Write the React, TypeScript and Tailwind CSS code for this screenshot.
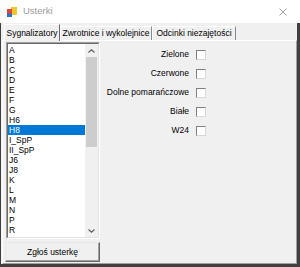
const items = [
  "A", "B", "C", "D", "E", "F", "G", "H6", "H8", "I_SpP", "II_SpP",
  "J6", "J8", "K", "L", "M", "N", "P", "R",
];

const lights = ["Zielone", "Czerwone", "Dolne pomarańczowe", "Białe", "W24"];

const tabs = [
  { label: "Sygnalizatory", width: "w-[56px]" },
  { label: "Zwrotnice i wykolejnice", width: "w-[92px]" },
  { label: "Odcinki niezajętości", width: "w-[84px]" },
];

function AppIcon() {
  return (
    <svg width="10" height="10" viewBox="0 0 10 10">
      <rect x="4" y="0" width="6" height="8" fill="#f4c531" />
      <rect x="0" y="2" width="5" height="5" fill="#e0473b" />
      <rect x="0" y="6.5" width="5" height="3.5" fill="#2f6fd0" />
    </svg>
  );
}

function Chevron({ up }: { up?: boolean }) {
  return (
    <svg width="7" height="4" viewBox="0 0 7 4">
      <polyline
        points={up ? "0.5,3.5 3.5,0.8 6.5,3.5" : "0.5,0.5 3.5,3.2 6.5,0.5"}
        fill="none"
        stroke="#606060"
        strokeWidth="1.2"
      />
    </svg>
  );
}

export default function App() {
  const selected = "H8";

  return (
    <div className="w-[300px] h-[267px] bg-[#f0f0f0] flex flex-col overflow-hidden font-['Liberation_Sans',Arial,sans-serif] text-[8.5px] text-black">
      {/* Title bar */}
      <div className="h-[23px] bg-white flex items-center pl-[7px] pr-[13px] shrink-0">
        <AppIcon />
        <span className="ml-[6px] text-[9.5px] text-[#9a9a9a]">Usterki</span>
        <svg className="ml-auto" width="8" height="8" viewBox="0 0 8 8">
          <path d="M0.5 0.5 L7.5 7.5 M7.5 0.5 L0.5 7.5" stroke="#9a9a9a" strokeWidth="0.9" />
        </svg>
      </div>

      {/* Body */}
      <div className="flex-1 flex flex-col border-l border-r-[3px] border-b-[3px] border-[#404040]">
        {/* Tab strip */}
        <div className="h-[17px] flex items-end pl-[3px] shrink-0">
          {tabs.map((t, i) =>
            i === 0 ? (
              <div
                key={t.label}
                className={`${t.width} h-[17px] -mb-px relative z-10 bg-[#f0f0f0] border-t border-l border-white border-r border-r-[#696969] flex items-center justify-center`}
              >
                {t.label}
              </div>
            ) : (
              <div
                key={t.label}
                className={`${t.width} h-[14px] border-t border-l border-white border-r border-r-[#8a8a8a] flex items-center justify-center`}
              >
                {t.label}
              </div>
            )
          )}
        </div>

        {/* Tab panel */}
        <div className="flex-1 flex border-t border-l border-white border-r border-b border-r-[#a0a0a0] border-b-[#a0a0a0] ml-px pl-[2px]">
          {/* List + button */}
          <div className="w-[95px] flex flex-col">
            <div className="mt-px ml-px w-[94px] h-[197px] border border-[#a0a0a0] border-r-white border-b-white">
              <div className="h-full border border-[#696969] border-r-[#e3e3e3] border-b-[#e3e3e3] bg-white flex">
                <div className="flex-1 pt-px">
                  {items.map((it) => (
                    <div
                      key={it}
                      className={`h-[10px] leading-[10px] pl-px ${
                        it === selected ? "bg-[#0078d7] text-white" : ""
                      }`}
                    >
                      {it}
                    </div>
                  ))}
                </div>
                {/* Scrollbar */}
                <div className="w-[13px] bg-[#f0f0f0] flex flex-col">
                  <div className="h-[13px] flex items-center justify-center">
                    <Chevron up />
                  </div>
                  <div className="mx-px h-[90px] bg-[#cdcdcd]" />
                  <div className="flex-1" />
                  <div className="h-[13px] flex items-center justify-center">
                    <Chevron />
                  </div>
                </div>
              </div>
            </div>
            <button className="mt-[3px] h-[20px] w-[95px] bg-[#f0f0f0] border border-[#e8e8e8] border-r-[#696969] border-b-[#696969] shadow-[inset_-1px_-1px_0_#a0a0a0] flex items-center justify-center">
              Zgłoś usterkę
            </button>
          </div>

          {/* Checkboxes */}
          <div className="w-[106px] pt-[4px] flex flex-col">
            {lights.map((l) => (
              <div key={l} className="h-[19px] flex items-center justify-end gap-[7px]">
                <span>{l}</span>
                <span className="w-[10px] h-[10px] bg-white border border-[#808080] border-r-[#d8d8d8] border-b-[#d8d8d8]" />
              </div>
            ))}
          </div>
        </div>
      </div>
    </div>
  );
}
